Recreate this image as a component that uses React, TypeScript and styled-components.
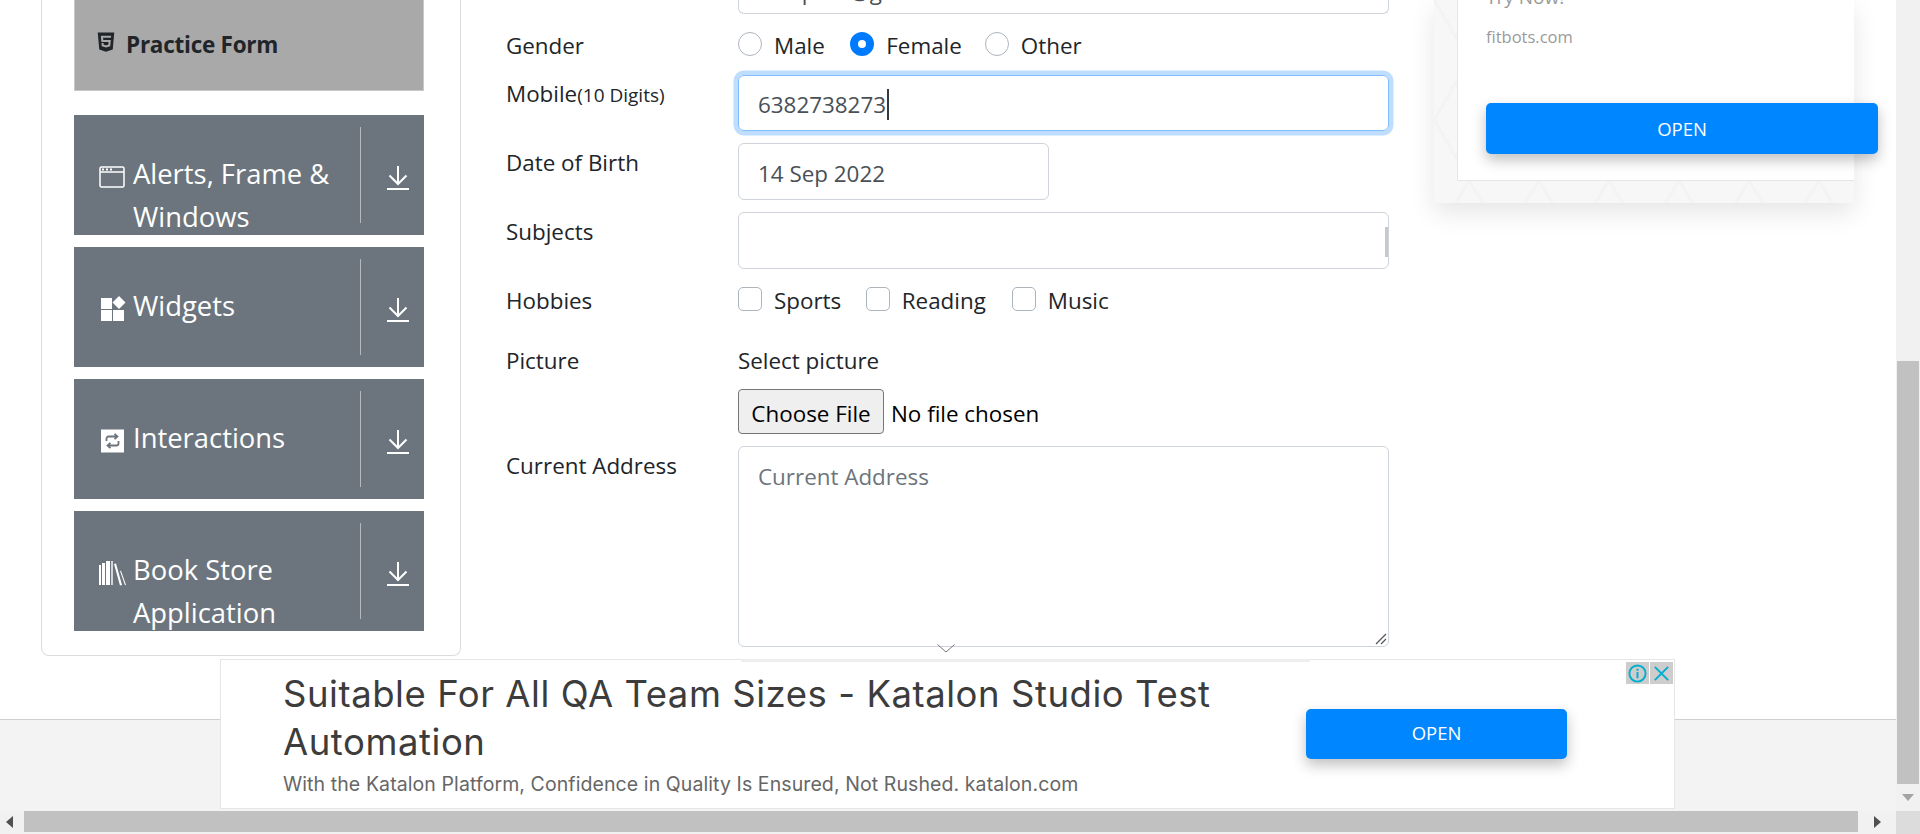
import React from "react";
import styled, { createGlobalStyle } from "styled-components";
import { FaHtml5 } from "react-icons/fa";

const Global = createGlobalStyle`
  html, body { margin: 0; padding: 0; background: #fff; overflow: hidden; }
  * { box-sizing: border-box; }
  body { font-family: "Open Sans", "Noto Sans", sans-serif; color: #212529; }
`;

const Viewport = styled.div`
  position: relative;
  width: 1920px;
  height: 834px;
  overflow: hidden;
  display: flex;
  flex-direction: column;
`;
const TopArea = styled.div`
  display: flex;
  height: 811px;
`;
const Page = styled.div`
  width: 1896px;
  display: flex;
  flex-direction: column;
`;
const Content = styled.div`
  height: 719px;
  display: flex;
  overflow: hidden;
  background: #fff;
`;
const Footer = styled.div`
  height: 92px;
  background: #f3f3f3;
  border-top: 1px solid #cfcfcf;
`;

/* scrollbars */
const VTrack = styled.div`
  width: 24px;
  background: #f1f1f1;
  display: flex;
  flex-direction: column;
  align-items: center;
  padding-top: 361px;
`;
const VThumb = styled.div`
  width: 22px;
  height: 423px;
  background: #c1c1c1;
`;
const DownArrow = styled.div`
  margin-top: 10px;
  border-left: 6px solid transparent;
  border-right: 6px solid transparent;
  border-top: 7px solid #a3a3a3;
`;
const HTrack = styled.div`
  height: 23px;
  background: #f1f1f1;
  display: flex;
`;
const LeftArrow = styled.div`
  width: 24px;
  display: flex;
  align-items: center;
  justify-content: center;
  padding: 0 6px 2px 0;
  &::before {
    content: "";
    border-top: 6px solid transparent;
    border-bottom: 6px solid transparent;
    border-right: 7px solid #505050;
  }
`;
const HThumb = styled.div`
  width: 1834px;
  height: 21px;
  background: #c1c1c1;
`;
const RightArrow = styled.div`
  width: 38px;
  display: flex;
  align-items: center;
  justify-content: center;
  padding-bottom: 2px;
  &::before {
    content: "";
    border-top: 6px solid transparent;
    border-bottom: 6px solid transparent;
    border-left: 7px solid #505050;
  }
`;
const Corner = styled.div`
  width: 24px;
  background: #dcdcdc;
`;

/* sidebar */
const Sidebar = styled.aside`
  margin-left: 41px;
  width: 420px;
  height: 656px;
  flex: none;
  padding: 0 36px 0 32px;
  border: 1px solid #dcdcdc;
  border-top: none;
  border-radius: 0 0 8px 8px;
  display: flex;
  flex-direction: column;
`;
const ActiveItem = styled.div`
  height: 91px;
  background: #a9a9a9;
  border: 1px solid #c8c8cc;
  border-top: none;
  display: flex;
  align-items: center;
  padding: 0 0 1px 20px;
  margin-bottom: 24px;
  font-size: 22.5px;
  font-weight: 700;
  letter-spacing: -0.25px;
  color: #212529;
  svg { width: 22px; height: 22px; margin: -6px 9px 0 0; flex: none; }
`;
const MenuItem = styled.div`
  height: 120px;
  flex: none;
  background: #6c757d;
  margin-bottom: 12px;
  display: flex;
  overflow: hidden;
  color: #fff;
`;
const MenuLabel = styled.div`
  width: 286px;
  padding: 37px 0 0 24px;
  display: flex;
  align-items: flex-start;
`;
const MenuIcon = styled.svg`
  width: 29px;
  height: 26px;
  margin: 12px 6px 0 0;
  flex: none;
`;
const MenuText = styled.div`
  font-size: 27.4px;
  line-height: 43px;
  width: 220px;
`;
const MenuSide = styled.div`
  flex: 1;
  margin: 12px 0;
  border-left: 1px solid #b4b9be;
  display: flex;
  justify-content: center;
  padding: 39px 0 0 10px;
  svg { width: 22px; height: 24px; }
`;

/* form */
const Form = styled.div`
  margin-left: 45px;
  width: 883px;
  flex: none;
  display: flex;
  flex-direction: column;
  font-size: 22.4px;
`;
const Row = styled.div<{ $top: number; $height: number }>`
  display: flex;
  margin-top: ${(p) => p.$top}px;
  height: ${(p) => p.$height}px;
`;
const Label = styled.div<{ $pad?: number }>`
  width: 232px;
  flex: none;
  line-height: 30px;
  padding-top: ${(p) => p.$pad ?? 0}px;
`;
const SmallNote = styled.span`
  font-size: 19px;
`;
const FieldBox = styled.div<{ $width?: number; $drop?: number }>`
  width: ${(p) => p.$width ?? 651}px;
  height: 100%;
  border: 1px solid #ced4da;
  border-radius: 6px;
  padding: ${(p) => p.$drop ?? 0}px 19px 0;
  display: flex;
  align-items: center;
  color: #495057;
  position: relative;
`;
const StubField = styled.div`
  width: 651px;
  height: 14px;
  margin-left: 232px;
  border: 1px solid #ced4da;
  border-top: none;
  border-radius: 0 0 6px 6px;
  overflow: hidden;
  padding: 0 19px;
  color: #495057;
`;
const StubText = styled.div`
  line-height: 30px;
  margin-top: -23px;
`;
const FocusedBox = styled(FieldBox)`
  border-color: #80bdff;
  box-shadow: 0 0 0 4.5px rgba(0, 123, 255, 0.25);
`;
const Caret = styled.span`
  display: inline-block;
  width: 2px;
  height: 31px;
  background: #343a40;
  margin-left: 1px;
`;
const SideThumb = styled.div`
  position: absolute;
  right: 0;
  top: 14px;
  width: 3px;
  height: 30px;
  background: #c8c8c8;
`;
const Options = styled.div`
  display: flex;
  align-items: flex-start;
  line-height: 30px;
`;
const Mark = styled.span<{ $round?: boolean; $on?: boolean }>`
  width: 24px;
  height: 24px;
  margin: ${(p) => (p.$round ? 2 : 1)}px 12px 0 0;
  flex: none;
  border-radius: ${(p) => (p.$round ? "50%" : "5px")};
  border: ${(p) => (p.$on ? "8px solid #007bff" : "1px solid #adb5bd")};
  background: #fff;
`;
const OptionText = styled.span<{ $gap: number; $drop?: number }>`
  margin-right: ${(p) => p.$gap}px;
  padding-top: ${(p) => p.$drop ?? 0}px;
`;
const FileColumn = styled.div`
  display: flex;
  flex-direction: column;
  line-height: 30px;
`;
const FileLine = styled.div`
  display: flex;
  align-items: center;
  margin-top: 13px;
  color: #000;
`;
const FileButton = styled.div`
  width: 146px;
  height: 45px;
  padding-top: 5px;
  background: #efefef;
  border: 1px solid #767676;
  border-radius: 4px;
  display: flex;
  align-items: center;
  justify-content: center;
  margin-right: 7px;
`;
const NoFile = styled.span`
  padding-top: 5px;
`;
const Placeholder = styled.div`
  color: #6c757d;
  margin-top: 15px;
  line-height: 30px;
`;
const AddressBox = styled(FieldBox)`
  align-items: flex-start;
`;
const Grip = styled.svg`
  position: absolute;
  right: 1px;
  bottom: 1px;
  width: 13px;
  height: 13px;
`;

/* right ad */
const SideAd = styled.div`
  margin-left: 45px;
  width: 420px;
  height: 203px;
  flex: none;
  padding-left: 23px;
  background-color: #f7f7f7;
  background-image: linear-gradient(60deg, transparent 48%, #f2f2f2 50%, transparent 52%),
    linear-gradient(-60deg, transparent 48%, #f2f2f2 50%, transparent 52%);
  background-size: 70px 120px;
  box-shadow: 0 10px 24px rgba(0, 0, 0, 0.1);
`;
const SideAdInner = styled.div`
  height: 181px;
  display: flex;
  flex-direction: column;
  background: #fff;
  border-left: 1px solid #e6e6e6;
  border-bottom: 1px solid #e6e6e6;
  padding-left: 28px;
`;
const SideAdTry = styled.div`
  font-size: 19px;
  line-height: 24px;
  margin-top: -15px;
  color: #9a9a9a;
`;
const SideAdSite = styled.div`
  font-size: 16.5px;
  line-height: 24px;
  margin-top: 16px;
  color: #9a9a9a;
`;
const OpenButton = styled.div<{ $w: number; $h: number }>`
  width: ${(p) => p.$w}px;
  height: ${(p) => p.$h}px;
  background: #0086ff;
  border-radius: 5px;
  color: #fff;
  font-size: 18.5px;
  display: flex;
  align-items: center;
  justify-content: center;
  box-shadow: 0 6px 14px rgba(0, 0, 0, 0.25);
  flex: none;
`;
const SideOpen = styled(OpenButton)`
  margin-top: 54px;
`;

/* bottom ad */
const BottomAd = styled.div`
  position: absolute;
  left: 220px;
  top: 659px;
  width: 1455px;
  height: 150px;
  background: #fff;
  border: 1px solid #e6e6e6;
  display: flex;
  align-items: flex-start;
  padding-left: 62px;
`;
const AdStrip = styled.div`
  position: absolute;
  top: -1px;
  left: 520px;
  width: 569px;
  height: 3px;
  background: #eeeeee;
`;
const AdCopy = styled.div`
  width: 1024px;
  flex: none;
  padding-top: 10px;
`;
const AdTitle = styled.div`
  font-family: "Inter", "Roboto", sans-serif;
  font-size: 36.5px;
  line-height: 48px;
  letter-spacing: 0.55px;
  color: #3c3c3c;
`;
const AdSub = styled.div`
  font-family: "Inter", "Roboto", sans-serif;
  font-size: 19.5px;
  line-height: 26px;
  letter-spacing: 0.09px;
  margin-top: 5px;
  color: #666;
`;
const AdOpen = styled(OpenButton)`
  margin: 49px 0 0 -1px;
  padding-bottom: 3px;
`;
const AdControls = styled.div`
  position: absolute;
  top: 2px;
  right: 1px;
  display: flex;
  gap: 1px;
`;
const AdControl = styled.div`
  width: 23px;
  height: 22px;
  background: #cdcdcd;
  display: flex;
  align-items: center;
  justify-content: center;
`;
const AdTab = styled.div`
  position: absolute;
  top: 644px;
  left: 937px;
  width: 18px;
  height: 9px;
  line-height: 0;
`;

const DownloadIcon = () => (
  <svg viewBox="0 0 22 24" fill="none" stroke="#fff" strokeWidth="2">
    <path d="M11 0v18M2.500 9.500L11 18l8.500-8.500" />
    <path d="M0 23h22" />
  </svg>
);

const menu = [
  {
    text: "Alerts, Frame & Windows",
    icon: (
      <MenuIcon viewBox="0 0 29 26" fill="none" stroke="#fff">
        <rect x="2" y="3" width="24" height="20" rx="1.500" strokeWidth="1.500" />
        <path d="M2 8h24" strokeWidth="1.500" />
        <path d="M4 5.500h2M8 5.500h2M12 5.500h2" strokeWidth="2" />
      </MenuIcon>
    ),
  },
  {
    text: "Widgets",
    icon: (
      <MenuIcon viewBox="0 0 29 26" fill="#fff">
        <rect x="3" y="2" width="11" height="11" />
        <rect x="3" y="14" width="11" height="11" />
        <rect x="15" y="14" width="11" height="11" />
        <path d="M21 0l6.500 6.500L21 13l-6.500-6.500z" />
      </MenuIcon>
    ),
  },
  {
    text: "Interactions",
    icon: (
      <MenuIcon viewBox="0 0 29 26" fill="none">
        <rect x="3" y="1.500" width="23" height="23" fill="#fff" />
        <path
          d="M8.500 13v-2.500a2 2 0 0 1 2-2h8M16.500 5.800l3 2.700-3 2.700M20.500 13v2.500a2 2 0 0 1-2 2h-8M12.500 14.800l-3 2.700 3 2.700"
          stroke="#6c757d"
          strokeWidth="1.800"
        />
      </MenuIcon>
    ),
  },
  {
    text: "Book Store Application",
    icon: (
      <MenuIcon viewBox="0 0 29 26" fill="#fff">
        <rect x="1" y="5" width="2" height="20" />
        <rect x="4" y="3" width="3" height="22" />
        <rect x="8" y="1" width="4" height="24" />
        <rect x="13" y="1" width="2" height="24" opacity="0.7" />
        <path d="M16 4l2-.6 6 21.600-2 .6z" />
        <path d="M22 11l1-.3 5 14.300-1 .3z" />
      </MenuIcon>
    ),
  },
];

const gender = [
  { t: "Male", gap: 25.5, on: false },
  { t: "Female", gap: 23, on: true },
  { t: "Other", gap: 0, on: false },
];
const hobbies = [
  { t: "Sports", gap: 24.5 },
  { t: "Reading", gap: 26 },
  { t: "Music", gap: 0 },
];

export default function App() {
  return (
    <Viewport>
      <Global />
      <TopArea>
        <Page>
          <Content>
            <Sidebar>
              <ActiveItem>
                <FaHtml5 />
                Practice Form
              </ActiveItem>
              {menu.map((m) => (
                <MenuItem key={m.text}>
                  <MenuLabel>
                    {m.icon}
                    <MenuText>{m.text}</MenuText>
                  </MenuLabel>
                  <MenuSide>
                    <DownloadIcon />
                  </MenuSide>
                </MenuItem>
              ))}
            </Sidebar>
            <Form>
              <StubField>
                <StubText>sampath@gmail.com</StubText>
              </StubField>
              <Row $top={16} $height={30}>
                <Label $pad={1}>Gender</Label>
                <Options>
                  {gender.map((g) => (
                    <React.Fragment key={g.t}>
                      <Mark $round $on={g.on} />
                      <OptionText $gap={g.gap} $drop={1}>
                        {g.t}
                      </OptionText>
                    </React.Fragment>
                  ))}
                </Options>
              </Row>
              <Row $top={15} $height={56}>
                <Label $pad={4}>
                  Mobile<SmallNote>(10 Digits)</SmallNote>
                </Label>
                <FocusedBox $drop={2}>
                  6382738273
                  <Caret />
                </FocusedBox>
              </Row>
              <Row $top={12} $height={57}>
                <Label $pad={5}>Date of Birth</Label>
                <FieldBox $width={311} $drop={3}>
                  14 Sep 2022
                </FieldBox>
              </Row>
              <Row $top={12} $height={57}>
                <Label $pad={5}>Subjects</Label>
                <FieldBox>
                  <SideThumb />
                </FieldBox>
              </Row>
              <Row $top={17} $height={30}>
                <Label>Hobbies</Label>
                <Options>
                  {hobbies.map((h) => (
                    <React.Fragment key={h.t}>
                      <Mark />
                      <OptionText $gap={h.gap}>{h.t}</OptionText>
                    </React.Fragment>
                  ))}
                </Options>
              </Row>
              <Row $top={30} $height={88}>
                <Label>Picture</Label>
                <FileColumn>
                  Select picture
                  <FileLine>
                    <FileButton>Choose File</FileButton>
                    <NoFile>No file chosen</NoFile>
                  </FileLine>
                </FileColumn>
              </Row>
              <Row $top={12} $height={201}>
                <Label $pad={5}>Current Address</Label>
                <AddressBox>
                  <Placeholder>Current Address</Placeholder>
                  <Grip viewBox="0 0 13 13" stroke="#555" strokeWidth="1.200">
                    <path d="M12 2L2 12M12 7l-5 5" />
                  </Grip>
                </AddressBox>
              </Row>
            </Form>
            <SideAd>
              <SideAdInner>
                <SideAdTry>Try Now!</SideAdTry>
                <SideAdSite>fitbots.com</SideAdSite>
                <SideOpen $w={392} $h={51}>
                  OPEN
                </SideOpen>
              </SideAdInner>
            </SideAd>
          </Content>
          <Footer />
        </Page>
        <VTrack>
          <VThumb />
          <DownArrow />
        </VTrack>
      </TopArea>
      <HTrack>
        <LeftArrow />
        <HThumb />
        <RightArrow />
        <Corner />
      </HTrack>
      <BottomAd>
        <AdStrip />
        <AdCopy>
          <AdTitle>Suitable For All QA Team Sizes - Katalon Studio Test Automation</AdTitle>
          <AdSub>With the Katalon Platform, Confidence in Quality Is Ensured, Not Rushed. katalon.com</AdSub>
        </AdCopy>
        <AdOpen $w={261} $h={50}>
          OPEN
        </AdOpen>
        <AdControls>
          <AdControl>
            <svg viewBox="0 0 20 20" width="19" height="19" fill="none" stroke="#00aecd" strokeWidth="2">
              <circle cx="10" cy="10" r="8.500" />
              <path d="M10 8.500V15M10 5v2" />
            </svg>
          </AdControl>
          <AdControl>
            <svg viewBox="0 0 20 20" width="19" height="19" fill="none" stroke="#00aecd" strokeWidth="2">
              <path d="M3 3l14 14M17 3L3 17" />
            </svg>
          </AdControl>
        </AdControls>
      </BottomAd>
      <AdTab>
        <svg viewBox="0 0 18 9" width="18" height="9" fill="none" stroke="#777" strokeWidth="1">
          <path d="M0.500 0.500L9 8l8.500-7.500" />
        </svg>
      </AdTab>
    </Viewport>
  );
}
